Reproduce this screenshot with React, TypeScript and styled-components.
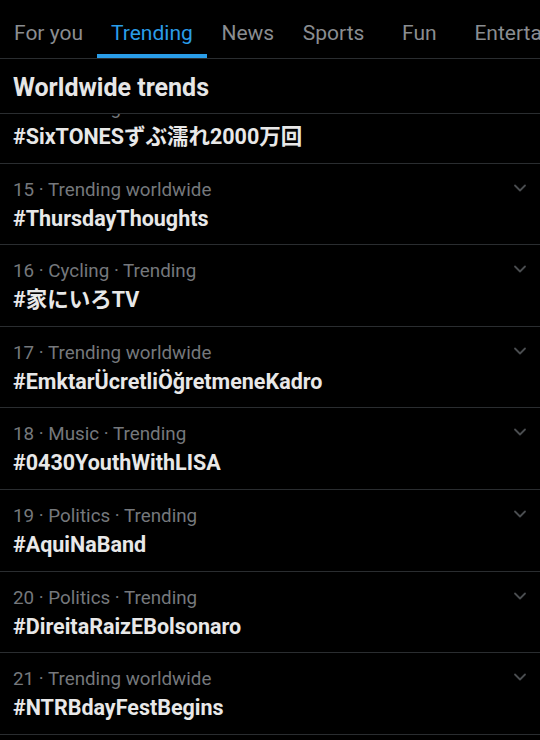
import React from 'react';
import styled, { createGlobalStyle } from 'styled-components';

const GlobalStyle = createGlobalStyle`
  html, body {
    margin: 0;
    padding: 0;
    background: #000;
  }
  body {
    font-family: Roboto, "Noto Sans", "Noto Sans CJK JP", sans-serif;
    -webkit-font-smoothing: antialiased;
  }
`;

const Screen = styled.div`
  width: 540px;
  height: 740px;
  background: #000;
  overflow: hidden;
  display: flex;
  flex-direction: column;
`;

const TabBar = styled.nav`
  display: flex;
  height: 59px;
  border-bottom: 1px solid #2a2d30;
  box-sizing: border-box;
  flex-shrink: 0;
  overflow: hidden;
`;

const Tab = styled.div<{ $active?: boolean }>`
  position: relative;
  flex-shrink: 0;
  min-width: 82px;
  padding: 8px 14px 0;
  box-sizing: border-box;
  display: flex;
  align-items: center;
  justify-content: center;
  font-size: 21px;
  white-space: nowrap;
  color: ${(p) => (p.$active ? '#2a9de8' : '#8a8d91')};

  &::after {
    content: '';
    display: ${(p) => (p.$active ? 'block' : 'none')};
    position: absolute;
    left: 0;
    right: 0;
    bottom: 0;
    height: 4px;
    background: #2a9de8;
  }
`;

const Header = styled.h2`
  margin: 0;
  height: 55px;
  padding: 2px 13px 0;
  display: flex;
  align-items: center;
  font-size: 25px;
  font-weight: 700;
  color: #e6e6e6;
  border-bottom: 1px solid #2a2d30;
  box-sizing: border-box;
  flex-shrink: 0;
  position: relative;
  z-index: 1;
  background: #000;
`;

const Viewport = styled.div`
  flex: 1;
  overflow: hidden;
`;

const List = styled.div`
  margin-top: -32px;
`;

const Row = styled.div`
  position: relative;
  height: 81.6px;
  box-sizing: border-box;
  padding: 13px 13px 0;
  border-bottom: 1px solid #2a2d30;
`;

const Meta = styled.div`
  font-size: 18.8px;
  color: #75787c;
  line-height: 27px;
`;

const Title = styled.div`
  font-size: 21.5px;
  font-weight: 700;
  color: #e8e8e8;
  line-height: 29px;
  height: 29px;
  font-family: Roboto, "Noto Sans CJK JP", sans-serif;
`;

const Chevron = styled.svg`
  position: absolute;
  right: 13px;
  top: 19px;
  width: 14px;
  height: 10px;
`;

const tabs = ['For you', 'Trending', 'News', 'Sports', 'Fun', 'Entertainment'];

const trends = [
  { n: 14, meta: 'Trending worldwide', tag: '#SixTONESずぶ濡れ2000万回' },
  { n: 15, meta: 'Trending worldwide', tag: '#ThursdayThoughts' },
  { n: 16, meta: 'Cycling · Trending', tag: '#家にいろTV' },
  { n: 17, meta: 'Trending worldwide', tag: '#EmktarÜcretliÖğretmeneKadro' },
  { n: 18, meta: 'Music · Trending', tag: '#0430YouthWithLISA' },
  { n: 19, meta: 'Politics · Trending', tag: '#AquiNaBand' },
  { n: 20, meta: 'Politics · Trending', tag: '#DireitaRaizEBolsonaro' },
  { n: 21, meta: 'Trending worldwide', tag: '#NTRBdayFestBegins' },
  { n: 22, meta: 'Trending worldwide', tag: '#StayHome' },
];

export default function App() {
  return (
    <Screen>
      <GlobalStyle />
      <TabBar>
        {tabs.map((t) => (
          <Tab key={t} $active={t === 'Trending'}>
            {t}
          </Tab>
        ))}
      </TabBar>
      <Header>Worldwide trends</Header>
      <Viewport>
        <List>
          {trends.map((t) => (
            <Row key={t.n}>
              <Meta>
                {t.n} · {t.meta}
              </Meta>
              <Title>{t.tag}</Title>
              <Chevron viewBox="0 0 14 10">
                <path d="M2 2.5 L7 7.5 L12 2.5" fill="none" stroke="#4a4d50" strokeWidth="1.8" strokeLinecap="round" strokeLinejoin="round" />
              </Chevron>
            </Row>
          ))}
        </List>
      </Viewport>
    </Screen>
  );
}
